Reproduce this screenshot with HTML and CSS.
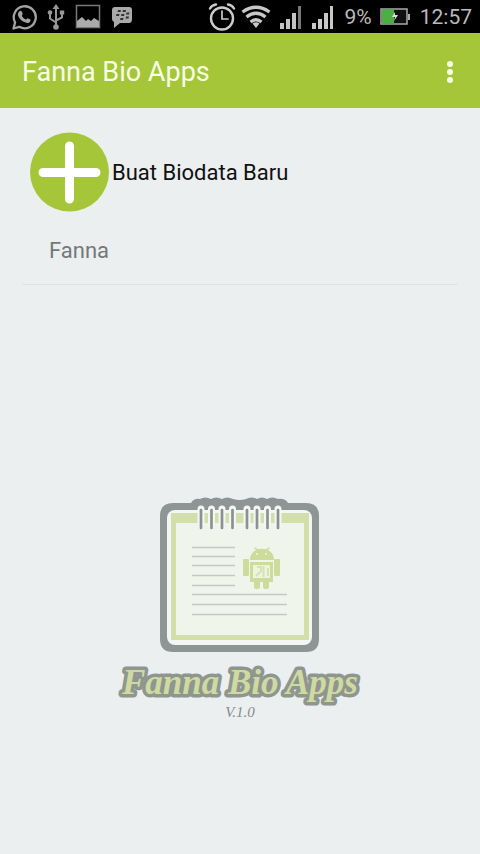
FILE: index.html
```html
<!DOCTYPE html>
<html lang="id">
<head>
<meta charset="utf-8">
<meta name="viewport" content="width=device-width, initial-scale=1">
<title>Fanna Bio Apps</title>
<link rel="stylesheet" href="styles.css">
</head>
<body>
<div class="status">
  <div class="status-group notifications">
    <svg width="26" height="28" viewBox="0 0 26 28" aria-hidden="true">
      <path d="M2.500 25.500l1.600-6A11 11 0 1 1 8.300 23.800z" fill="none" stroke="#a2a2a2" stroke-width="2.300" stroke-linejoin="round"/>
      <path d="M8.500 8.200c.8-.8 1.800-.7 2.200.2l1 2.400c.2.600-.9 1.600-.8 2 .8 1.700 2.100 2.900 3.900 3.700.5.200 1.500-1.500 2-1.300l2.600 1.300c.7.400-.1 2.300-1 2.900-1.500 1-3.500.5-5.800-.6-2.500-1.300-4.400-3.500-5.300-5.600-.8-2-.2-3.900 1.200-5z" fill="#a2a2a2"/>
    </svg>
    <svg width="18" height="28" viewBox="0 0 18 28" aria-hidden="true">
      <g fill="none" stroke="#989898" stroke-width="2"><path d="M9 5v19M9 19.500l-6-4V10M9 17.500l6-3V10"/></g>
      <path d="M9 1l3.500 5h-7zM12.800 7.500h4.400v4h-4.400z" fill="#989898"/><circle cx="3" cy="9.500" r="2.300" fill="#989898"/><circle cx="9" cy="24" r="2.800" fill="#989898"/>
    </svg>
    <svg width="26" height="28" viewBox="0 0 26 28" aria-hidden="true">
      <rect x="1.500" y="2.500" width="23" height="22" fill="none" stroke="#777" stroke-width="1.500"/>
      <path d="M2 24v-6l5-4 4 4 2-2 3 2 3-3 5 3v6z" fill="#aaa"/>
    </svg>
    <svg width="22" height="28" viewBox="0 0 22 28" aria-hidden="true">
      <path d="M4 4h14q3 0 3 3v9q0 4-3 4H9l-6 5V19q-2-1-2-3V7q0-3 3-3z" fill="#aaa"/>
      <path d="M7 7h3l-.5 2h-3zM12 7h3l-.5 2h-3zM5.500 11h3L8 13H5zM10.500 11h3l-.5 2h-3zM15.500 9.500h3l-.5 2h-3zM9.500 15h3l-.5 2H9zM15 13.500h3l-.5 2h-3z" fill="#333"/>
    </svg>
  </div>
  <div class="status-group system">
    <svg width="28" height="30" viewBox="0 0 28 30" aria-hidden="true">
      <g fill="none" stroke="#ccc" stroke-width="2.400" stroke-linecap="round"><circle cx="14" cy="16.500" r="11"/><path d="M2 6.500Q4 3 8 2.500M20 2.500q4 .5 6 4"/><path d="M14 9v8h6" stroke-width="1.700"/></g>
    </svg>
    <svg class="wifi" width="30" height="24" viewBox="0 0 30 24" aria-hidden="true">
      <g fill="none" stroke="#c8c8c8" stroke-width="3.200"><path d="M1.500 7q13.500-9.500 27 0M5.500 12q9.500-7.500 19 0M9.500 17q5.500-4.500 11 0"/></g><path d="M11.500 18.500q3.500-2.500 7 0L15 23z" fill="#c8c8c8"/>
    </svg>
    <svg width="24" height="26" viewBox="0 0 24 26" aria-hidden="true">
      <path d="M1 19h4v6H1zM7 15h4v10H7zM13 9h4v16h-4z" fill="#c4c4c4"/><path d="M19 2h3v23h-3z" fill="#777"/>
    </svg>
    <svg width="24" height="26" viewBox="0 0 24 26" aria-hidden="true">
      <path d="M1 19h4v6H1zM7 15h4v10H7zM13 9h4v16h-4zM19 2h3v23h-3z" fill="#c8c8c8"/>
    </svg>
    <span class="reading">9%</span>
    <svg width="30" height="18" viewBox="0 0 30 18" aria-hidden="true">
      <rect x="1" y="1" width="26" height="15" fill="#111" stroke="#aaa" stroke-width="1.500"/>
      <path d="M2 2h12v13H2z" fill="#4caf42"/><path d="M28 6h2v6h-2z" fill="#aaa"/><path d="M15 4l-3 5h3l-1 4 4-6h-3z" fill="#ddd"/>
    </svg>
    <time class="reading">12:57</time>
  </div>
</div>
<header class="app-bar">
  <h1>Fanna Bio Apps</h1>
  <button class="menu" type="button" aria-label="Menu">
    <svg width="8" height="24" viewBox="0 0 8 24"><g fill="#f7ffe5"><circle cx="4" cy="4" r="3"/><circle cx="4" cy="12" r="3"/><circle cx="4" cy="20" r="3"/></g></svg>
  </button>
</header>
<main>
  <button class="create" type="button">
    <svg width="80" height="80" viewBox="0 0 80 80" aria-hidden="true"><circle cx="39.500" cy="40" r="39.500" fill="#a5c639"/><path d="M39.500 14v53M13 40.500h53" stroke="#fff" stroke-width="9" stroke-linecap="round"/></svg>
    <span>Buat Biodata Baru</span>
  </button>
  <ul class="people"><li><a href="#fanna">Fanna</a></li></ul>
  <section class="brand">
    <svg width="162" height="156" viewBox="0 0 162 156" aria-hidden="true">
      <path d="M14 6h18q3-5 9-4 5-3 11 0 5-3 11 0 5-3 11 0 7 2 13 0 5-3 11 0 5-3 10 0 5-3 11 0 7-1 10 4h18q13 0 13 13v123q0 13-13 13H14q-13 0-13-13V19Q1 6 14 6z" fill="#8f9494"/>
      <rect x="8" y="13" width="145" height="135" rx="8" fill="#f3f6f3"/>
      <path d="M12 16h138v127H12z" fill="#d2dfaa"/><path d="M17 26h128v112H17z" fill="#eff5ea"/>
      <g stroke="#f3f6f3" stroke-width="7" stroke-linecap="round"><path d="M42 12v16M52.500 12v16M63 12v16M73.500 12v16M88 12v16M98 12v16M108.500 12v16M119 12v16"/></g>
      <g stroke="#8b9191" stroke-width="2.700" stroke-linecap="round"><path d="M42 13v18M52.500 13v18M63 13v18M73.500 13v18M88 13v18M98 13v18M108.500 13v18M119 13v18"/></g>
      <path d="M33 50.500h43M33 59.500h43M33 68.500h43M33 78.500h43M33 88.500h43M33 97.500h95M33 107.500h95M33 117.500h95" stroke="#c3cac4" stroke-width="1.500"/>
      <g fill="#cddc9b"><path d="M91 63q0-7 6-10l-2-2 1-.8 3 2q4-1 8 0l3-2 1 .8-2 2q6 3 6 10zM91 65h23v20H91z"/><rect x="84" y="62" width="6" height="17" rx="1"/><rect x="115" y="62" width="6" height="17" rx="1"/><rect x="95" y="83" width="6" height="9" rx="2"/><rect x="104" y="83" width="6" height="9" rx="2"/></g>
      <circle cx="98" cy="57" r="1" fill="#eff5ea"/><circle cx="107" cy="57" r="1" fill="#eff5ea"/>
      <path d="M94 68h17v13H94z" fill="#edf3df"/><path d="M97 79l5-5v-4h-4M104.500 69v11M109 71v8" fill="none" stroke="#d6e2b4" stroke-width="2"/>
    </svg>
    <svg class="wordmark" width="248" height="50" viewBox="0 0 248 50">
      <text x="124" y="35">Fanna Bio Apps</text>
    </svg>
    <p class="version">V.1.0</p>
  </section>
</main>
</body>
</html>
```

FILE: styles.css
```css
* { box-sizing: border-box; }
body {
  margin: 0;
  min-height: 100vh;
  background: #ebeff0;
  color: #111;
  font-family: Roboto, sans-serif;
}
h1, p, ul { margin: 0; padding: 0; }
svg { display: block; flex: none; }
button { border: 0; background: none; font: inherit; color: inherit; cursor: pointer; }
.status {
  display: flex;
  justify-content: space-between;
  height: 33px;
  padding: 0 8px 0 11px;
  background: #000;
  color: #bababa;
  font-size: 21px;
}
.status-group { display: flex; align-items: center; }
.notifications { gap: 10px; }
.system { gap: 8px; }
.wifi { margin-left: -3px; }
.reading { margin-left: 2px; }
.app-bar {
  display: flex;
  align-items: center;
  justify-content: space-between;
  height: 75px;
  padding: 2px 16px 0 22px;
  background: #a5c639;
  color: #f7ffe5;
}
h1 { font-size: 27px; font-weight: 400; line-height: 32px; }
.menu { padding: 8px 10px; }
main { padding: 24px 22px; }
.create {
  display: flex;
  align-items: center;
  gap: 2px;
  padding: 0 8px;
  font-size: 22px;
}
.people { list-style: none; }
.people a {
  display: block;
  padding: 24px 27px 18px;
  border-bottom: 1px solid #dfe3e4;
  color: #757879;
  font-size: 22px;
  line-height: 30px;
  text-decoration: none;
}
.brand {
  display: flex;
  flex-direction: column;
  align-items: center;
  padding-top: 212px;
}
.wordmark {
  margin-top: 6px;
  fill: #cedaa0;
  stroke: #8f9690;
  stroke-width: 7px;
  stroke-linejoin: round;
  paint-order: stroke;
  font: italic bold 35px "Liberation Serif", serif;
  text-anchor: middle;
}
.version {
  margin-top: -6px;
  color: #858b8c;
  font: italic 15px/18px "Liberation Serif", serif;
}
```
